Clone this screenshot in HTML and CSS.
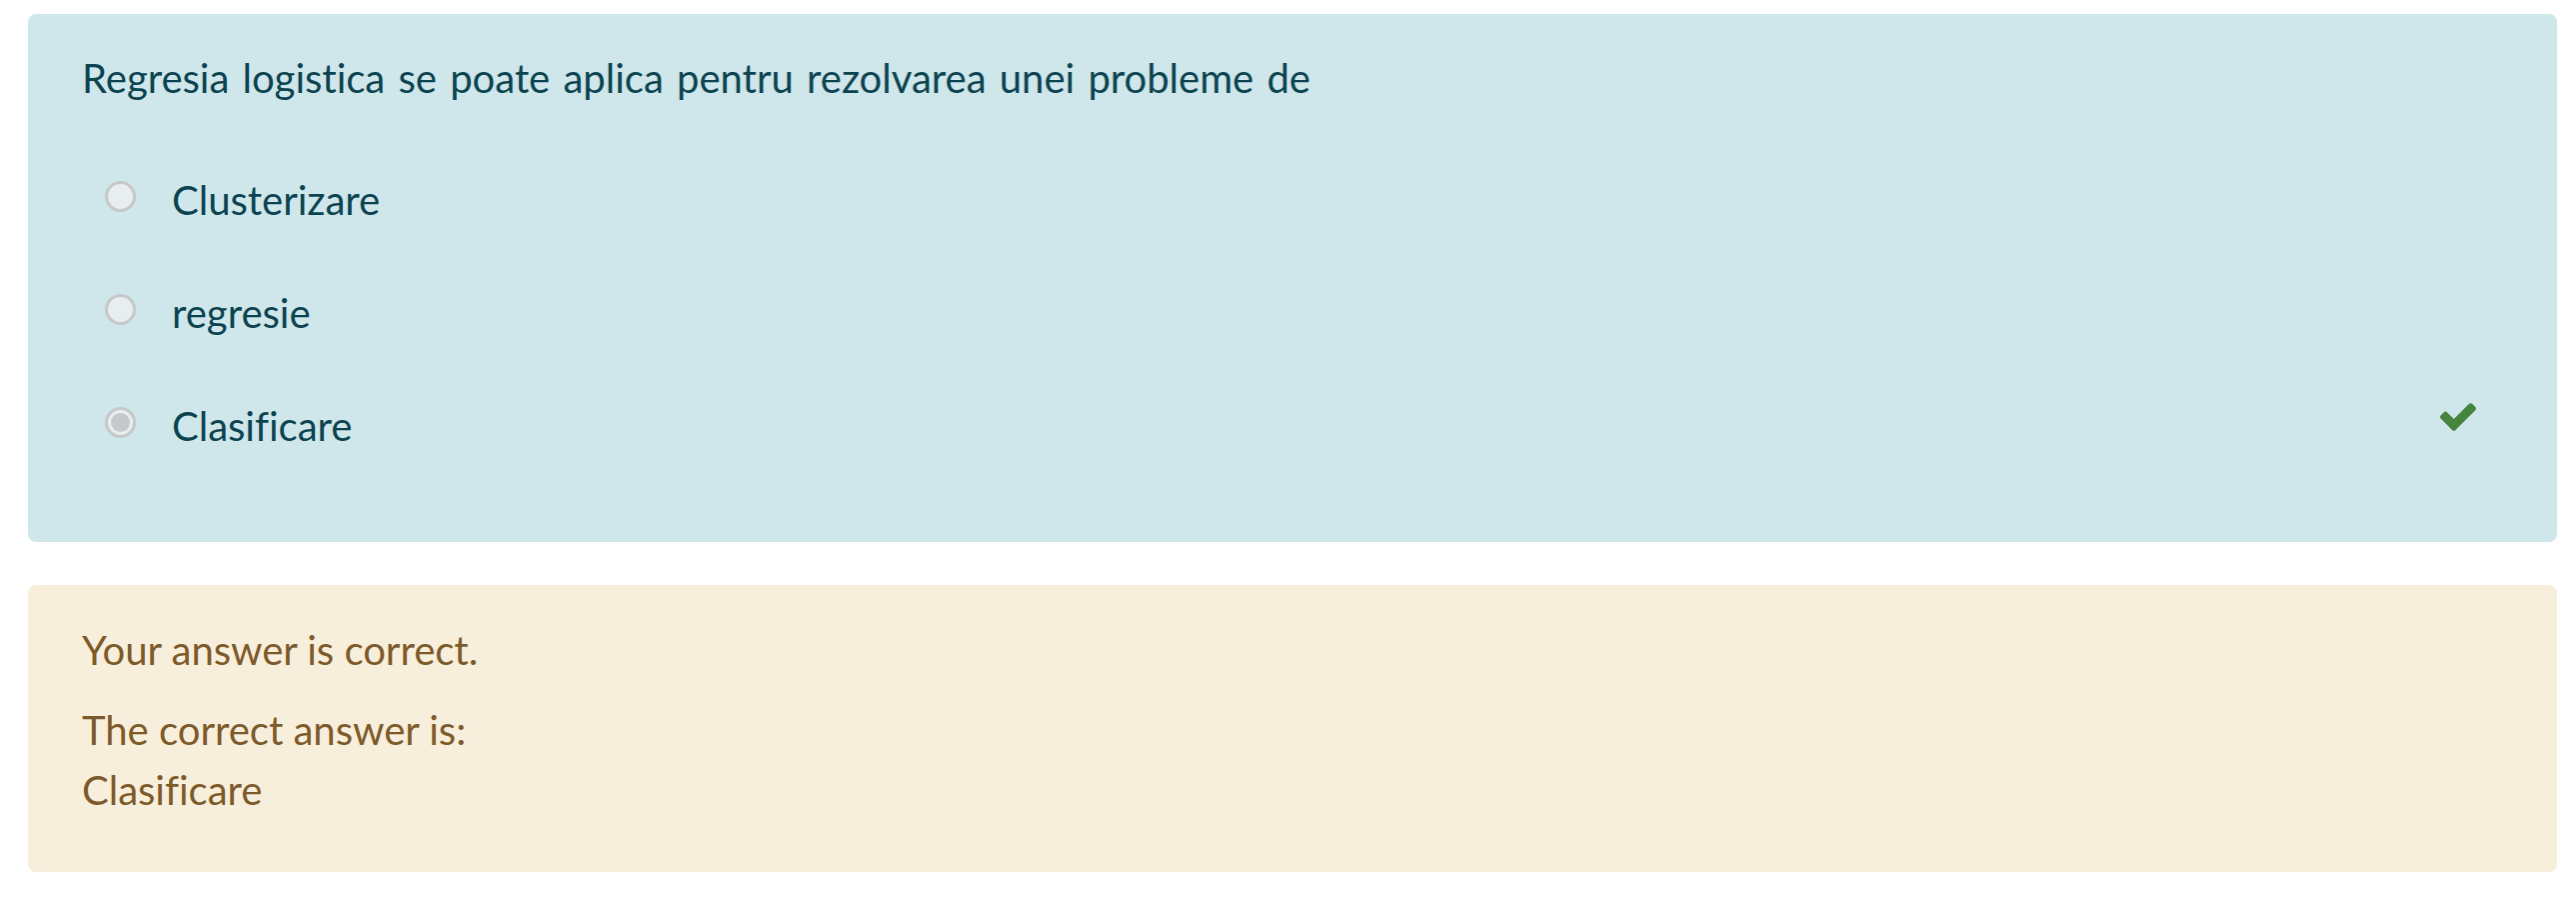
FILE: index.html
```html
<!DOCTYPE html>
<html lang="ro">
<head>
<meta charset="utf-8">
<title>Question</title>
<link rel="stylesheet" href="styles.css">
</head>
<body>
<div class="que">
  <div class="formulation">
    <div class="qtext">Regresia logistica se poate aplica pentru rezolvarea unei probleme de</div>
    <div class="answer">
      <div class="option">
        <span class="radio"></span>
        <span class="label">Clusterizare</span>
      </div>
      <div class="option">
        <span class="radio"></span>
        <span class="label">regresie</span>
      </div>
      <div class="option">
        <span class="radio checked"></span>
        <span class="label">Clasificare</span>
        <svg class="check" viewBox="121 334 1550 1188" aria-label="Correct"><path d="M1671 566q0 40-28 68l-724 724-136 136q-28 28-68 28t-68-28l-136-136-362-362q-28-28-28-68t28-68l136-136q28-28 68-28t68 28l294 295 656-657q28-28 68-28t68 28l136 136q28 28 28 68z"/></svg>
      </div>
    </div>
  </div>
  <div class="outcome">
    <div class="feedback">Your answer is correct.</div>
    <div class="rightanswer">The correct answer is:<br>Clasificare</div>
  </div>
</div>
</body>
</html>
```
FILE: styles.css
```css
html, body {
  margin: 0;
  padding: 0;
  background: #ffffff;
}

body {
  font-family: Lato, "Open Sans", sans-serif;
  font-size: 40px;
  line-height: 60px;
  font-variant-ligatures: none;
}

.que {
  padding: 14px 19px 0 28px;
  display: flex;
  flex-direction: column;
  gap: 43px;
}

.formulation {
  background: #cfe6ea;
  color: #0b4450;
  border-radius: 8px;
  padding: 34px 54px 86px 54px;
}

.qtext {
  margin-bottom: 62px;
  word-spacing: 3px;
}

.answer {
  display: flex;
  flex-direction: column;
  gap: 53px;
}

.option {
  display: flex;
  align-items: flex-start;
  height: 60px;
}

.radio {
  flex: none;
  box-sizing: border-box;
  width: 31px;
  height: 31px;
  margin: 11px 36px 0 23px;
  border-radius: 50%;
  border: 3px solid #c6c9ca;
  background: #e8eef0;
  display: flex;
  align-items: center;
  justify-content: center;
}

.radio.checked::after {
  content: "";
  width: 19px;
  height: 19px;
  border-radius: 50%;
  background: #c6c9ca;
}

.check {
  width: 36px;
  height: 28px;
  margin: 7px 27px 0 auto;
  fill: #468540;
}

.outcome {
  background: #f8eedc;
  color: #7d5a29;
  border-radius: 8px;
  padding: 35px 54px 52px 54px;
}

.feedback {
  margin-bottom: 20px;
}
```
